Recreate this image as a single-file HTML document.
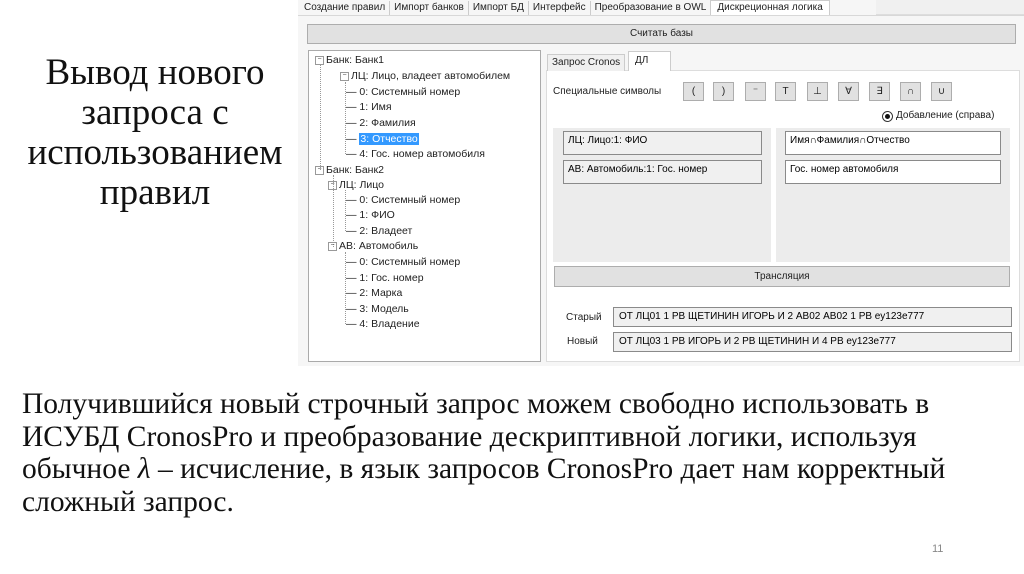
<!DOCTYPE html>
<html><head><meta charset="utf-8"><style>
body{margin:0;width:1024px;height:574px;background:#fff;position:relative;overflow:hidden;font-family:"Liberation Sans",sans-serif}
.a{position:absolute}
.ui{font-size:10px;color:#222;white-space:nowrap}
.serif{font-family:"Liberation Serif",serif;color:#111}
.btn{position:absolute;background:#e1e1e1;border:1px solid #adadad;box-sizing:border-box;text-align:center;font-size:10px;color:#222}
.fld{position:absolute;border:1px solid #8a8a8a;box-sizing:border-box;font-size:10px;padding:3px 4px;white-space:nowrap}
.tr{position:absolute;font-size:10.5px;color:#222;white-space:nowrap}
.pm{display:inline-block;width:7px;height:7px;border:1px solid #999;font-size:7px;line-height:6px;text-align:center;margin-right:2px;vertical-align:middle;color:#444}
</style></head><body>
<div class="a" style="left:298px;top:0;width:726px;height:366px;background:#f6f6f6"></div>
<div class="a ui" style="left:300px;top:0;height:15px;line-height:14px">
<span style="display:inline-block;padding:0 4px;border-right:1px solid #ccc">Создание правил</span><span style="display:inline-block;padding:0 4px;border-right:1px solid #ccc">Импорт банков</span><span style="display:inline-block;padding:0 4px;border-right:1px solid #ccc">Импорт БД</span><span style="display:inline-block;padding:0 4px;border-right:1px solid #ccc">Интерфейс</span><span style="display:inline-block;padding:0 4px">Преобразование в OWL</span><span style="display:inline-block;padding:0 6px;background:#fff;border:1px solid #ccc;border-bottom:none">Дискреционная логика</span></div>
<div class="a" style="left:876px;top:0;width:148px;height:14px;background:#f0f0f0;border-bottom:1px solid #ddd"></div>
<div class="a" style="left:298px;top:15px;width:726px;height:1px;background:#d8d8d8"></div>
<div class="btn" style="left:307px;top:24px;width:709px;height:20px;line-height:18px">Считать базы</div>
<div class="a" style="left:308px;top:50px;width:233px;height:312px;background:#fff;border:1px solid #aaa;box-sizing:border-box"></div>
<div class="a" style="left:320px;top:65px;width:1px;height:105px;border-left:1px dotted #999"></div>
<div class="a" style="left:345px;top:82px;width:1px;height:72px;border-left:1px dotted #999"></div>
<div class="a" style="left:345px;top:190px;width:1px;height:41px;border-left:1px dotted #999"></div>
<div class="a" style="left:345px;top:252px;width:1px;height:72px;border-left:1px dotted #999"></div>
<div class="a" style="left:333px;top:175px;width:1px;height:72px;border-left:1px dotted #999"></div>
<div class="tr" style="left:315px;top:54px"><span class="pm">−</span>Банк: Банк1</div>
<div class="tr" style="left:340px;top:70px"><span class="pm">−</span>ЛЦ: Лицо, владеет автомобилем</div>
<div class="tr" style="left:346px;top:86px">— 0: Системный номер</div>
<div class="tr" style="left:346px;top:101px">— 1: Имя</div>
<div class="tr" style="left:346px;top:117px">— 2: Фамилия</div>
<div class="tr" style="left:346px;top:133px">— <span style="background:#3399ff;color:#fff;padding:0 1px">3: Отчество</span></div>
<div class="tr" style="left:346px;top:148px">— 4: Гос. номер автомобиля</div>
<div class="tr" style="left:315px;top:164px"><span class="pm">−</span>Банк: Банк2</div>
<div class="tr" style="left:328px;top:179px"><span class="pm">−</span>ЛЦ: Лицо</div>
<div class="tr" style="left:346px;top:194px">— 0: Системный номер</div>
<div class="tr" style="left:346px;top:209px">— 1: ФИО</div>
<div class="tr" style="left:346px;top:225px">— 2: Владеет</div>
<div class="tr" style="left:328px;top:240px"><span class="pm">−</span>АВ: Автомобиль</div>
<div class="tr" style="left:346px;top:256px">— 0: Системный номер</div>
<div class="tr" style="left:346px;top:272px">— 1: Гос. номер</div>
<div class="tr" style="left:346px;top:287px">— 2: Марка</div>
<div class="tr" style="left:346px;top:303px">— 3: Модель</div>
<div class="tr" style="left:346px;top:318px">— 4: Владение</div>
<div class="a" style="left:546px;top:70px;width:474px;height:292px;background:#fff;border:1px solid #ddd;box-sizing:border-box"></div>
<div class="a ui" style="left:547px;top:54px;height:16px;line-height:16px;padding:0 4px;border:1px solid #ccc;border-bottom:none;background:#f0f0f0">Запрос Cronos</div>
<div class="a ui" style="left:628px;top:51px;width:43px;height:20px;line-height:18px;padding-left:6px;border:1px solid #ccc;border-bottom:none;background:#fff;box-sizing:border-box">ДЛ</div>
<div class="a ui" style="left:553px;top:86px">Специальные символы</div>
<div class="btn" style="left:683px;top:82px;width:21px;height:19px;line-height:17px">(</div>
<div class="btn" style="left:713px;top:82px;width:21px;height:19px;line-height:17px">)</div>
<div class="btn" style="left:745px;top:82px;width:21px;height:19px;line-height:17px">⁻</div>
<div class="btn" style="left:775px;top:82px;width:21px;height:19px;line-height:17px">T</div>
<div class="btn" style="left:807px;top:82px;width:21px;height:19px;line-height:17px">⊥</div>
<div class="btn" style="left:838px;top:82px;width:21px;height:19px;line-height:17px">∀</div>
<div class="btn" style="left:869px;top:82px;width:21px;height:19px;line-height:17px">∃</div>
<div class="btn" style="left:900px;top:82px;width:21px;height:19px;line-height:17px">∩</div>
<div class="btn" style="left:931px;top:82px;width:21px;height:19px;line-height:17px">∪</div>
<div class="a" style="left:882px;top:111px;width:9px;height:9px;border:1px solid #333;border-radius:50%;background:#fff"></div>
<div class="a" style="left:885px;top:114px;width:5px;height:5px;border-radius:50%;background:#111"></div>
<div class="a ui" style="left:896px;top:110px">Добавление (справа)</div>
<div class="a" style="left:553px;top:128px;width:218px;height:134px;background:#ececec"></div>
<div class="a" style="left:776px;top:128px;width:234px;height:134px;background:#ececec"></div>
<div class="fld" style="left:563px;top:131px;width:199px;height:24px;background:#f0f0f0">ЛЦ: Лицо:1: ФИО</div>
<div class="fld" style="left:563px;top:160px;width:199px;height:24px;background:#f0f0f0">АВ: Автомобиль:1: Гос. номер</div>
<div class="fld" style="left:785px;top:131px;width:216px;height:24px;background:#fff">Имя∩Фамилия∩Отчество</div>
<div class="fld" style="left:785px;top:160px;width:216px;height:24px;background:#fff">Гос. номер автомобиля</div>
<div class="btn" style="left:554px;top:266px;width:456px;height:21px;line-height:19px">Трансляция</div>
<div class="a ui" style="left:566px;top:312px">Старый</div>
<div class="a ui" style="left:567px;top:336px">Новый</div>
<div class="fld" style="left:613px;top:307px;width:399px;height:20px;background:#f0f0f0;padding:3px 5px">ОТ ЛЦ01 1 РВ ЩЕТИНИН ИГОРЬ И 2 АВ02 АВ02 1 РВ еу123е777</div>
<div class="fld" style="left:613px;top:332px;width:399px;height:20px;background:#f0f0f0;padding:3px 5px">ОТ ЛЦ03 1 РВ ИГОРЬ И 2 РВ ЩЕТИНИН И 4 РВ еу123е777</div>
<div class="a serif" style="left:0px;top:53px;width:310px;text-align:center;font-size:37px;line-height:40px;white-space:nowrap">Вывод нового<br>запроса с<br>использованием<br>правил</div>
<div class="a serif" style="left:22px;top:388px;width:1000px;font-size:29.5px;line-height:32.5px;white-space:nowrap">Получившийся новый строчный запрос можем свободно использовать в<br>ИСУБД CronosPro и преобразование дескриптивной логики, используя<br>обычное <i>λ</i> – исчисление, в язык запросов CronosPro дает нам корректный<br>сложный запрос.</div>
<div class="a" style="left:932px;top:543px;font-size:11px;color:#888">11</div>
</body></html>
